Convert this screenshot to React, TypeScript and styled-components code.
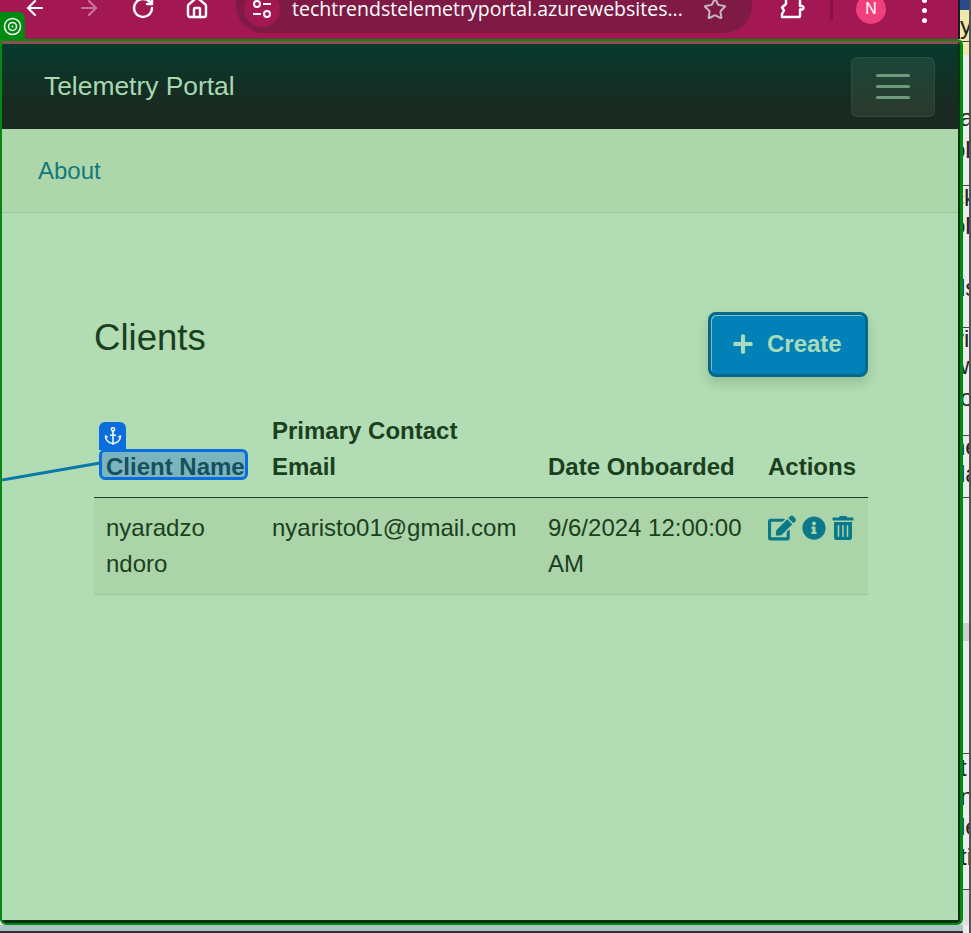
import React from "react";
import styled, { createGlobalStyle } from "styled-components";
import { ArrowLeft, ArrowRight, RotateCw, House, Star, Anchor } from "lucide-react";
import { FaEdit, FaInfoCircle, FaTrashAlt, FaPlus } from "react-icons/fa";

const Global = createGlobalStyle`
  html, body { margin: 0; padding: 0; background: #eee; }
  * { box-sizing: border-box; }
`;

const Page = styled.div`
  position: relative;
  width: 971px;
  height: 933px;
  overflow: hidden;
  display: grid;
  grid-template-columns: 960px 11px;
  font-family: "Liberation Sans", Arial, sans-serif;
`;

const Main = styled.div`
  display: flex;
  flex-direction: column;
  height: 933px;
  position: relative;
  z-index: 1;
`;

const Toolbar = styled.header`
  height: 39px;
  flex: none;
  background: #a31852;
  border-right: 2px solid #1c1c1c;
  display: flex;
  align-items: flex-start;
  padding-left: 8px;
  color: #fff;
  overflow: hidden;
`;

const ToolButton = styled.span<{ $dim?: boolean }>`
  flex: none;
  width: 54px;
  height: 24px;
  margin-top: -4px;
  display: flex;
  justify-content: center;
  opacity: ${(p) => (p.$dim ? 0.4 : 1)};
`;

const AddressPill = styled.div`
  flex: none;
  width: 516px;
  height: 56px;
  margin: -23px 0 0 12px;
  padding: 14px 0 0 8px;
  border-radius: 28px;
  background: #7f1a45;
  display: flex;
  align-items: flex-start;
`;

const TuneCircle = styled.span`
  flex: none;
  width: 36px;
  height: 36px;
  border-radius: 50%;
  background: #a31852;
  display: flex;
  align-items: center;
  justify-content: center;
`;

const UrlText = styled.span`
  flex: none;
  width: 410px;
  margin-left: 12px;
  line-height: 36px;
  font-family: "Open Sans", "Noto Sans", sans-serif;
  font-size: 19.5px;
  white-space: nowrap;
  color: #fff;
`;

const StarSlot = styled.span`
  flex: none;
  margin-left: 1px;
  height: 36px;
  display: flex;
  align-items: center;
  color: #c9b4bd;
`;

const PuzzleSlot = styled.span`
  flex: none;
  width: 26px;
  height: 20px;
  margin-left: 28px;
`;

const Divider = styled.span`
  flex: none;
  width: 3px;
  height: 20px;
  margin-left: 24px;
  background: #861346;
`;

const Avatar = styled.span`
  flex: none;
  width: 30px;
  height: 30px;
  margin: -6px 0 0 23px;
  border-radius: 50%;
  background: #ef3f7c;
  font-size: 16px;
  line-height: 30px;
  text-align: center;
  color: #fff;
`;

const Dots = styled.span`
  flex: none;
  width: 6px;
  margin: -2px 0 0 36px;
  display: flex;
  flex-direction: column;
  gap: 5px;
`;

const Dot = styled.i`
  display: block;
  width: 5px;
  height: 5px;
  border-radius: 50%;
  background: #fff;
`;

const TargetTag = styled.div`
  position: absolute;
  left: 0;
  top: 12px;
  width: 25px;
  height: 29px;
  z-index: 3;
  border-radius: 0 6px 0 0;
  background: #008a0f;
  display: flex;
  align-items: center;
  justify-content: center;
`;

const Frame = styled.div`
  flex: 1;
  min-height: 0;
  margin-right: -3px;
  display: flex;
  border: 2px solid #008a0f;
  border-right-width: 3px;
  border-radius: 0 6px 6px 6px;
  overflow: hidden;
`;

const Viewport = styled.div`
  flex: 1;
  min-width: 0;
  display: flex;
  flex-direction: column;
  border-right: 2px solid #0a3212;
  border-bottom: 3px solid #0a3212;
  background: #b2dcb3;
`;

const TopStripe = styled.div`
  height: 3px;
  flex: none;
  background: #8a5050;
`;

const Navbar = styled.nav`
  height: 85px;
  flex: none;
  padding: 0 23px 0 42px;
  display: flex;
  align-items: center;
  justify-content: space-between;
  background: linear-gradient(180deg, #063a2e 0%, #1a2a20 75%);
`;

const Brand = styled.span`
  font-size: 26.4px;
  color: #a8d8b0;
`;

const Toggler = styled.span`
  width: 84px;
  height: 60px;
  border-radius: 6px;
  border: 1px solid rgba(178, 220, 179, 0.08);
  background: rgba(178, 220, 179, 0.1);
  display: flex;
  flex-direction: column;
  align-items: center;
  justify-content: center;
  gap: 8px;
`;

const TogglerBar = styled.i`
  display: block;
  width: 34px;
  height: 3px;
  border-radius: 2px;
  background: #6f9a7d;
`;

const SubNav = styled.div`
  height: 84px;
  flex: none;
  padding-left: 36px;
  display: flex;
  align-items: center;
  background: #aed6ab;
  border-bottom: 1px solid #9cc5a2;
`;

const SubLink = styled.a`
  font-size: 24px;
  color: #14787f;
`;

const Content = styled.main`
  flex: 1;
  padding: 99px 0 0 92px;
`;

const Container = styled.div`
  width: 774px;
`;

const TitleRow = styled.div`
  height: 65px;
  display: flex;
  align-items: center;
  justify-content: space-between;
`;

const Title = styled.h1`
  margin: 0 0 13px;
  font-size: 36.6px;
  font-weight: 400;
  color: #1a4020;
`;

const CreateButton = styled.button`
  width: 160px;
  height: 65px;
  padding: 0 0 2px 21px;
  display: flex;
  align-items: center;
  gap: 13px;
  border: 3px solid #06688a;
  border-radius: 8px;
  background: #0280b8;
  box-shadow: inset 1px 1px 0 #7fc0c8, 0 6px 12px rgba(20, 60, 30, 0.18);
  color: #a8dcb8;
  font: 700 24px "Liberation Sans", Arial, sans-serif;
`;

const Table = styled.table`
  width: 774px;
  margin-top: 24px;
  table-layout: fixed;
  border-collapse: collapse;
  font-size: 24px;
  line-height: 36px;
  color: #1a4020;
`;

const HeadCell = styled.th<{ $w: number }>`
  width: ${(p) => p.$w}px;
  padding: 12px;
  text-align: left;
  vertical-align: bottom;
  font-weight: 700;
  border-bottom: 1px solid #1a4020;
`;

const BodyRow = styled.tr`
  background: #acd4a9;
  border-bottom: 1px solid #9cc5a2;
`;

const Cell = styled.td`
  padding: 12px;
  vertical-align: top;
`;

const Highlight = styled.span`
  position: relative;
  display: inline-block;
  vertical-align: top;
  height: 31px;
  line-height: 30px;
  margin: 0 -5px 0 -7px;
  padding: 0 0 0 4px;
  border: 3px solid #0b6ede;
  border-radius: 6px;
  background: #7ab5bf;
  color: #16505e;
  white-space: nowrap;
`;

const AnchorTag = styled.span`
  position: absolute;
  left: -3px;
  bottom: 100%;
  width: 27px;
  height: 28px;
  margin-bottom: 2px;
  border-radius: 6px 6px 0 0;
  background: #0b6ede;
  color: #fff;
  display: flex;
  align-items: center;
  justify-content: center;
`;

const LeaderLine = styled.svg`
  position: absolute;
  left: -102px;
  top: 8px;
  overflow: visible;
`;

const Actions = styled.div`
  display: flex;
  align-items: center;
  gap: 5.5px;
  height: 36px;
  color: #0a7a8a;
`;

const Sliver = styled.aside`
  height: 933px;
  display: flex;
  flex-direction: column;
  background: #ececec;
  border-right: 2px solid #555;
  font-size: 24px;
  color: #222;
`;

const SliverRow = styled.div<{ $h: number; $bg?: string; $line?: boolean; $indent?: number }>`
  height: ${(p) => p.$h}px;
  flex: none;
  overflow: hidden;
  line-height: ${(p) => p.$h}px;
  white-space: nowrap;
  text-indent: ${(p) => p.$indent ?? 0}px;
  background: ${(p) => p.$bg ?? "transparent"};
  border-bottom: ${(p) => (p.$line ? "1px solid #444" : "none")};
`;

const BottomGap = styled.div`
  height: 8px;
  flex: none;
  margin-right: -3px;
  background: #aac4c4;
  border-bottom: 2px solid #333;
`;

const sliverRows: { h: number; text?: string; bg?: string; line?: boolean; indent?: number }[] = [
  { h: 10, bg: "#2a4a90" },
  { h: 32, text: "y", bg: "#efe8a8", line: true },
  { h: 13, bg: "#efe8a8" },
  { h: 47 },
  { h: 32, text: "a" },
  { h: 32, text: "ol", indent: -8 },
  { h: 20, line: true },
  { h: 24, text: "ck", indent: -8 },
  { h: 32, text: "ol", indent: -8 },
  { h: 30 },
  { h: 32, text: "ds", indent: -8 },
  { h: 24, line: true },
  { h: 22, text: "vi", indent: -8 },
  { h: 32, text: "w" },
  { h: 32, text: "o" },
  { h: 22, line: true },
  { h: 22, text: "ne", indent: -8 },
  { h: 32, text: "da", indent: -8 },
  { h: 8, line: true },
  { h: 125 },
  { h: 18, bg: "#cfcfcf" },
  { h: 113, line: true },
  { h: 28, text: "t" },
  { h: 30, text: "n" },
  { h: 30, text: "le" },
  { h: 30, text: "ti" },
  { h: 18, line: true },
  { h: 35, bg: "#dedede" },
];

export default function App() {
  return (
    <Page>
      <Global />
      <Main>
        <TargetTag>
          <svg width="19" height="19" viewBox="0 0 19 19" fill="none" stroke="#fff" strokeWidth="1.5">
            <circle cx="9.5" cy="9.5" r="8" />
            <circle cx="9.5" cy="9.5" r="4" />
            <circle cx="9.5" cy="9.5" r="1" fill="#fff" stroke="none" />
          </svg>
        </TargetTag>
        <Toolbar>
          <ToolButton><ArrowLeft size={24} strokeWidth={2.2} /></ToolButton>
          <ToolButton $dim><ArrowRight size={24} strokeWidth={2.2} /></ToolButton>
          <ToolButton><RotateCw size={24} strokeWidth={2.4} /></ToolButton>
          <ToolButton><House size={24} strokeWidth={2.4} /></ToolButton>
          <AddressPill>
            <TuneCircle>
              <svg width="20" height="20" viewBox="0 0 20 20" fill="none" stroke="#fff" strokeWidth="2">
                <circle cx="5" cy="5" r="3" />
                <path d="M11 5h8M1 15h8" />
                <circle cx="15" cy="15" r="3" />
              </svg>
            </TuneCircle>
            <UrlText>techtrendstelemetryportal.azurewebsites...</UrlText>
            <StarSlot><Star size={24} strokeWidth={2} /></StarSlot>
          </AddressPill>
          <PuzzleSlot>
            <svg width="26" height="20" viewBox="0 0 26 20" fill="none" stroke="#fff" strokeWidth="2.4" strokeLinejoin="round">
              <path d="M6-4h14v10h2.5a2 2 0 0 1 0 3.5H20V16a1 1 0 0 1-1 1H2v-3l2-3.5-2-3L6 4V-4z" />
            </svg>
          </PuzzleSlot>
          <Divider />
          <Avatar>N</Avatar>
          <Dots><Dot /><Dot /><Dot /></Dots>
        </Toolbar>
        <Frame>
          <Viewport>
            <TopStripe />
            <Navbar>
              <Brand>Telemetry Portal</Brand>
              <Toggler><TogglerBar /><TogglerBar /><TogglerBar /></Toggler>
            </Navbar>
            <SubNav><SubLink>About</SubLink></SubNav>
            <Content>
              <Container>
                <TitleRow>
                  <Title>Clients</Title>
                  <CreateButton><FaPlus size={22} />Create</CreateButton>
                </TitleRow>
                <Table>
                  <thead>
                    <tr>
                      <HeadCell $w={166}>
                        <Highlight>
                          <AnchorTag><Anchor size={20} strokeWidth={1.8} /></AnchorTag>
                          <LeaderLine width="100" height="20">
                            <line x1="2" y1="20" x2="100" y2="3" stroke="#0a78a8" strokeWidth="3" />
                          </LeaderLine>
                          Client Name
                        </Highlight>
                      </HeadCell>
                      <HeadCell $w={276}>Primary Contact Email</HeadCell>
                      <HeadCell $w={220}>Date Onboarded</HeadCell>
                      <HeadCell $w={112}>Actions</HeadCell>
                    </tr>
                  </thead>
                  <tbody>
                    <BodyRow>
                      <Cell>nyaradzo ndoro</Cell>
                      <Cell>nyaristo01@gmail.com</Cell>
                      <Cell>9/6/2024 12:00:00 AM</Cell>
                      <Cell>
                        <Actions>
                          <FaEdit size={28} />
                          <FaInfoCircle size={24} />
                          <FaTrashAlt size={24} />
                        </Actions>
                      </Cell>
                    </BodyRow>
                  </tbody>
                </Table>
              </Container>
            </Content>
          </Viewport>
        </Frame>
        <BottomGap />
      </Main>
      <Sliver>
        {sliverRows.map((r, i) => (
          <SliverRow key={i} $h={r.h} $bg={r.bg} $line={r.line} $indent={r.indent}>{r.text}</SliverRow>
        ))}
      </Sliver>
    </Page>
  );
}
